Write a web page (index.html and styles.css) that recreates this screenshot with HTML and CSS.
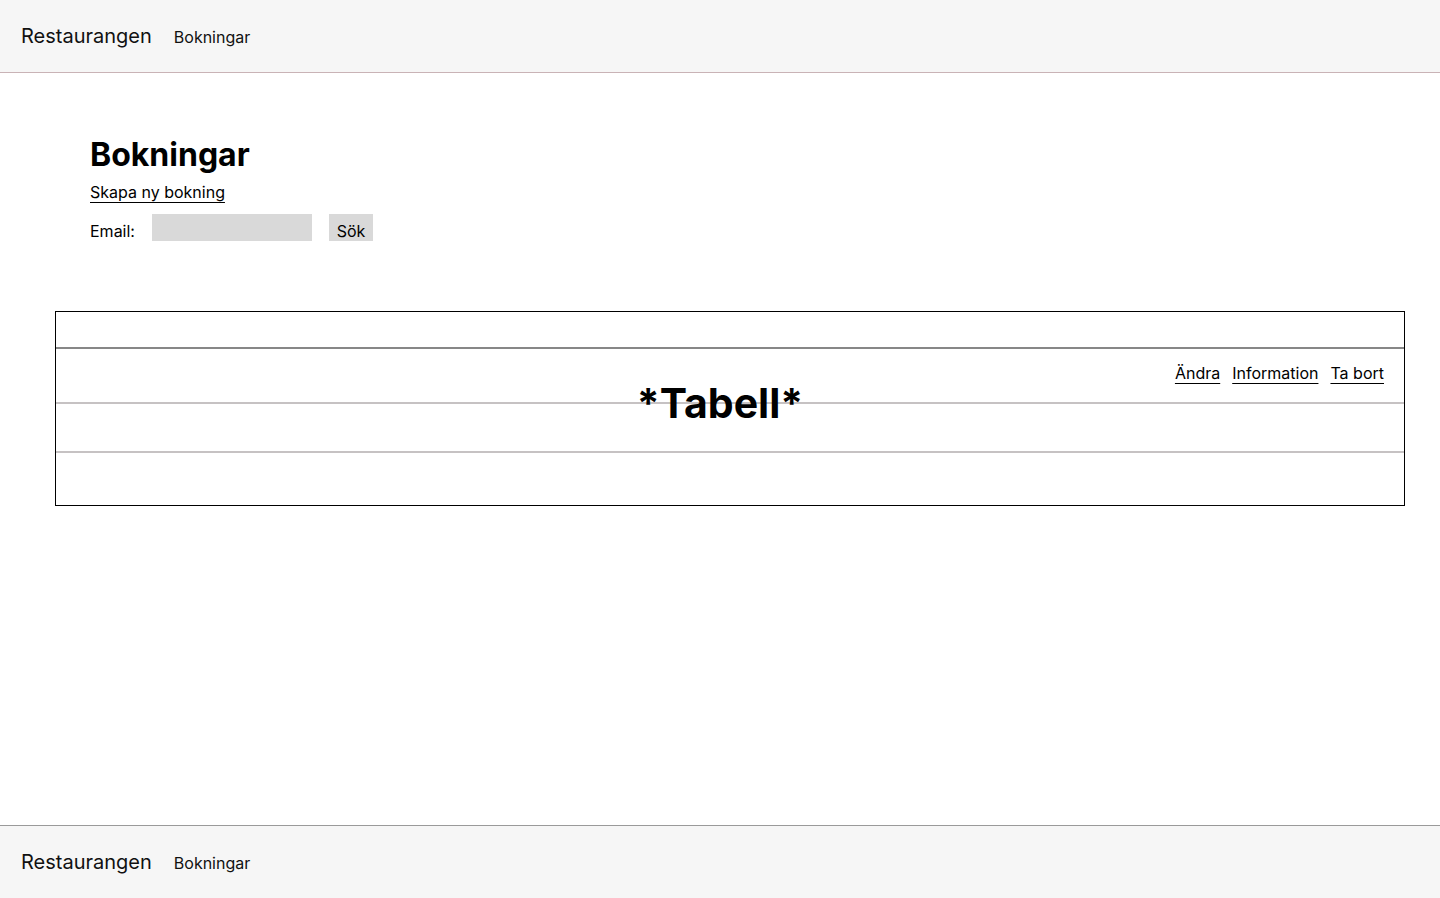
FILE: index.html
```html
<!DOCTYPE html>
<html lang="sv">
<head>
<meta charset="utf-8">
<title>Bokningar - Restaurangen</title>
<link rel="stylesheet" href="styles.css">
</head>
<body>
<header class="bar bar-top">
  <a class="brand" href="#">Restaurangen</a>
  <a class="nav-link" href="#">Bokningar</a>
</header>
<main class="main">
  <section class="intro">
    <h1 class="title">Bokningar</h1>
    <a class="create-link" href="#">Skapa ny bokning</a>
    <form class="search">
      <label class="search-label" for="email">Email:</label>
      <input class="search-input" id="email" type="text">
      <button class="search-btn" type="button">Sök</button>
    </form>
  </section>
  <div class="table">
    <div class="row row-head"></div>
    <div class="row row-a">
      <div class="actions">
        <a href="#">Ändra</a>
        <a href="#">Information</a>
        <a href="#">Ta bort</a>
      </div>
    </div>
    <div class="row row-b"></div>
    <div class="row row-c"></div>
    <div class="table-label">*Tabell*</div>
  </div>
</main>
<footer class="bar bar-bottom">
  <a class="brand" href="#">Restaurangen</a>
  <a class="nav-link" href="#">Bokningar</a>
</footer>
</body>
</html>
```
FILE: styles.css
```css
* { box-sizing: border-box; }
html, body { margin: 0; padding: 0; }
body {
  font-family: Inter, "Noto Sans", sans-serif;
  color: #000;
  background: #fff;
  min-height: 100vh;
  display: flex;
  flex-direction: column;
}
a {
  color: #000;
  text-underline-offset: 4px;
  text-decoration-thickness: 1px;
}
.bar {
  height: 73px;
  background: #f6f6f6;
  display: flex;
  align-items: center;
  padding: 0 21px;
  gap: 22px;
}
.bar-top { border-bottom: 1px solid #c9b3b6; }
.bar-bottom { height: 73px; border-top: 1px solid #9a9a9a; }
.brand {
  font-size: 20px;
  text-decoration: none;
  color: #111;
}
.nav-link {
  font-size: 16px;
  text-decoration: none;
  color: #111;
  padding-top: 2px;
}
.main { flex: 1; }
.intro { padding: 62px 0 0 90px; }
.title {
  font-size: 32px;
  font-weight: 700;
  margin: 0;
  line-height: 40px;
}
.create-link {
  display: inline-block;
  font-size: 16px;
  margin-top: 6px;
  line-height: 22px;
}
.search {
  display: flex;
  align-items: flex-end;
  margin-top: 11px;
  height: 27px;
}
.search-label { font-size: 16px; width: 62px; line-height: 20px; }
.search-input {
  width: 160px;
  height: 27px;
  border: 0;
  background: #d9d9d9;
  margin: 0;
  padding: 0;
}
.search-btn {
  margin-left: 17px;
  width: 44px;
  height: 27px;
  border: 0;
  background: #d9d9d9;
  font-family: inherit;
  font-size: 16px;
  padding: 8px 0 0;
  line-height: 19px;
  color: #000;
}
.table {
  position: relative;
  margin: 70px 0 0 55px;
  width: 1350px;
  border: 1px solid #000;
}
.row { border-bottom: 2px solid #c6c2c3; }
.row-head { height: 37px; border-bottom-color: #878787; }
.row-a { height: 55px; display: flex; align-items: center; justify-content: flex-end; padding: 0 20px 5px 0; }
.row-b { height: 49px; }
.row-c { height: 52px; border-bottom: 0; }
.actions { display: flex; gap: 12px; font-size: 16px; }
.table-label {
  position: absolute;
  left: -20px;
  right: 0;
  top: 66px;
  text-align: center;
  font-size: 41px;
  font-weight: 700;
  line-height: 50px;
  pointer-events: none;
}
```
